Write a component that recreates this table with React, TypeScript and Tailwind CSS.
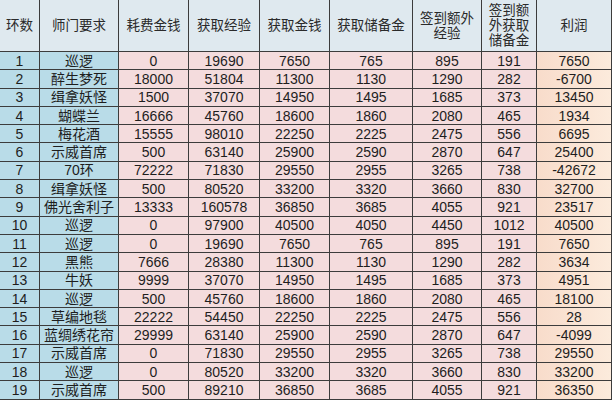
import React from "react";

const rows: (string | number)[][] = [
  [1, "巡逻", 0, 19690, 7650, 765, 895, 191, 7650],
  [2, "醉生梦死", 18000, 51804, 11300, 1130, 1290, 282, -6700],
  [3, "缉拿妖怪", 1500, 37070, 14950, 1495, 1685, 373, 13450],
  [4, "蝴蝶兰", 16666, 45760, 18600, 1860, 2080, 465, 1934],
  [5, "梅花酒", 15555, 98010, 22250, 2225, 2475, 556, 6695],
  [6, "示威首席", 500, 63140, 25900, 2590, 2870, 647, 25400],
  [7, "70环", 72222, 71830, 29550, 2955, 3265, 738, -42672],
  [8, "缉拿妖怪", 500, 80520, 33200, 3320, 3660, 830, 32700],
  [9, "佛光舍利子", 13333, 160578, 36850, 3685, 4055, 921, 23517],
  [10, "巡逻", 0, 97900, 40500, 4050, 4450, 1012, 40500],
  [11, "巡逻", 0, 19690, 7650, 765, 895, 191, 7650],
  [12, "黑熊", 7666, 28380, 11300, 1130, 1290, 282, 3634],
  [13, "牛妖", 9999, 37070, 14950, 1495, 1685, 373, 4951],
  [14, "巡逻", 500, 45760, 18600, 1860, 2080, 465, 18100],
  [15, "草编地毯", 22222, 54450, 22250, 2225, 2475, 556, 28],
  [16, "蓝绸绣花帘", 29999, 63140, 25900, 2590, 2870, 647, -4099],
  [17, "示威首席", 0, 71830, 29550, 2955, 3265, 738, 29550],
  [18, "巡逻", 0, 80520, 33200, 3320, 3660, 830, 33200],
  [19, "示威首席", 500, 89210, 36850, 3685, 4055, 921, 36350],
];

const headers: string[][] = [
  ["环数"],
  ["师门要求"],
  ["耗费金钱"],
  ["获取经验"],
  ["获取金钱"],
  ["获取储备金"],
  ["签到额外", "经验"],
  ["签到额", "外获取", "储备金"],
  ["利润"],
];

function cellBg(i: number) {
  if (i < 2) return "bg-[#b9dce8]";
  if (i === 8) return "bg-gradient-to-r from-[#f8dccb] to-[#fcebdc]";
  return "bg-[#f4dcdd]";
}

export default function App() {
  return (
    <div
      className="w-[612px] h-[400px] overflow-hidden bg-white text-[#1e1e1e]"
      style={{ fontFamily: '"Liberation Sans", "Noto Sans CJK SC", sans-serif' }}
    >
      <div className="grid grid-cols-[40px_79px_70px_71px_70px_83px_69px_55px_75px] grid-rows-[52px_repeat(19,18.3px)]">
        {headers.map((h, i) => (
          <div
            key={"h" + i}
            className="flex flex-col items-center justify-center border-r border-b border-[#3c3c3c] bg-[#dfe9ef] text-[13.5px] leading-[15px] text-[#2a2a2a]"
          >
            {h.map((line, j) => (
              <span key={j}>{line}</span>
            ))}
          </div>
        ))}
        {rows.map((r, ri) =>
          r.map((v, ci) => (
            <div
              key={ri + "-" + ci}
              className={
                "flex items-center justify-center border-r border-b border-[#3c3c3c] text-[14px] leading-none whitespace-nowrap " +
                cellBg(ci)
              }
            >
              {v}
            </div>
          ))
        )}
      </div>
    </div>
  );
}
